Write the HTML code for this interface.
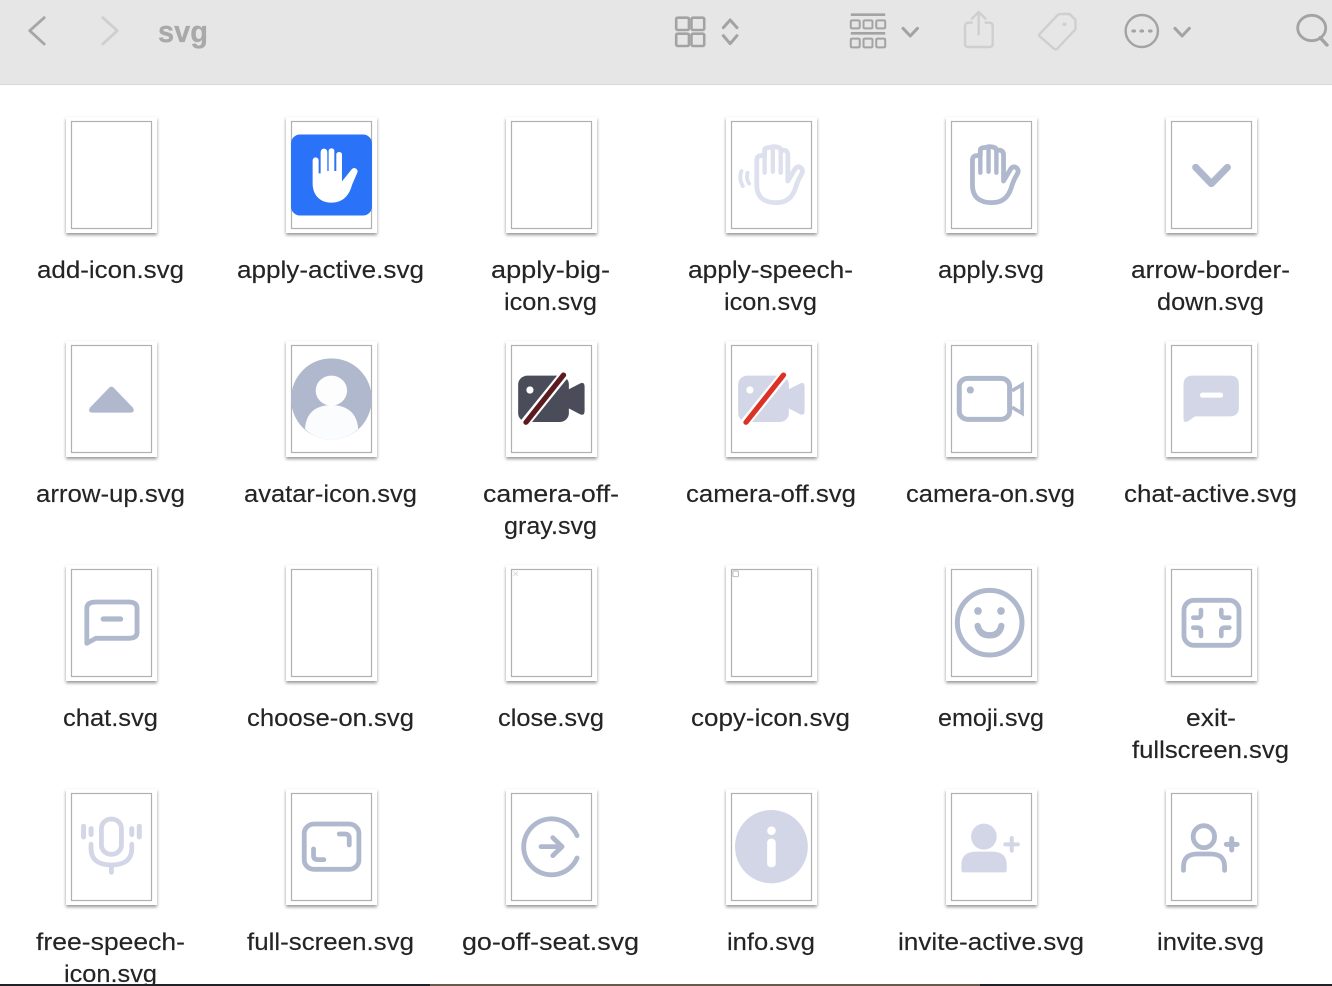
<!DOCTYPE html>
<html><head><meta charset="utf-8"><title>svg</title>
<style>
html,body{margin:0;padding:0;background:#fff;width:1332px;height:986px;overflow:hidden}
svg{position:absolute;left:0;top:0;display:block;filter:blur(.3px)}
text{font-family:"Liberation Sans",sans-serif;font-size:24px;fill:#242424;stroke:#242424;stroke-width:.15px}
.i *{vector-effect:non-scaling-stroke}
.s{fill:none;stroke-linecap:round;stroke-linejoin:round}
</style></head><body>
<svg width="1332" height="986" viewBox="0 0 1332 986" xmlns="http://www.w3.org/2000/svg">
<defs>
<filter id="sh" x="-20%" y="-20%" width="140%" height="140%"><feDropShadow dx="0" dy="2" stdDeviation="1.7" flood-color="#000" flood-opacity=".42"/></filter>
<g id="t"><rect x="66" y="117" width="91" height="116" fill="#fff" filter="url(#sh)"/><rect x="71.5" y="121.5" width="80" height="107" fill="#fff" stroke="#b0b0b0" stroke-width="1.2"/></g>
</defs>
<rect width="1332" height="84" fill="#e6e6e6"/><rect y="84" width="1332" height="1" fill="#d9d9d9"/>

<!-- toolbar left -->
<g class="i s" transform="translate(0,0) scale(.4248,.3333)">
<path d="M104 53 L70 92 L104 132" stroke="#a6a6a6" stroke-width="2.8"/>
<path d="M242 53 L276 92 L242 132" stroke="#cfcfcf" stroke-width="2.8"/>
</g>
<text x="158" y="42" textLength="50" lengthAdjust="spacingAndGlyphs" style="font-size:31px;font-weight:bold;fill:#a9a9a9;stroke:#a9a9a9;stroke-width:.3px">svg</text>
<!-- toolbar right -->
<g class="i s" transform="translate(666,0) scale(.4248,.3333)" stroke="#a3a3a3" stroke-width="2.6">
<rect x="24" y="53" width="30" height="37" rx="4"/><rect x="60" y="53" width="30" height="37" rx="4"/>
<rect x="24" y="101" width="30" height="37" rx="4"/><rect x="60" y="101" width="30" height="37" rx="4"/>
<path d="M135 83 L151 60 L167 83 M135 107 L151 131 L167 107" stroke-width="3"/>
<path d="M435 44 H516 M435 100 H516" stroke-width="2.6" stroke-linecap="butt"/>
<g stroke-width="2"><rect x="435" y="61" width="21" height="24" rx="3"/><rect x="465" y="61" width="21" height="24" rx="3"/><rect x="495" y="61" width="21" height="24" rx="3"/>
<rect x="435" y="116" width="21" height="26" rx="3"/><rect x="465" y="116" width="21" height="26" rx="3"/><rect x="495" y="116" width="21" height="26" rx="3"/></g>
<path d="M558 85 L575 108 L592 85 M1198 85 L1215 108 L1232 85" stroke-width="3"/>
<g stroke="#cfcfcf" stroke-width="2.4"><path d="M720 68 H712 Q704 68 704 78 V132 Q704 141 712 141 H761 Q769 141 769 132 V78 Q769 68 761 68 H752"/><path d="M736 103 V37 M720 56 L736 36 L752 56"/>
<path d="M879 103 L922 45 Q925 42 930 42 H950 L964 60 V88 L921 146 Q917 150 913 146 L879 108 Q877 105 879 103 Z"/><ellipse cx="938" cy="73" rx="5" ry="5" fill="#cfcfcf" stroke="none"/></g>
<ellipse cx="1120" cy="93" rx="38" ry="48" stroke-width="2.4"/>
<g fill="#a3a3a3" stroke="none"><ellipse cx="1101" cy="93" rx="5.5" ry="5"/><ellipse cx="1120" cy="93" rx="5.5" ry="5"/><ellipse cx="1140" cy="93" rx="5.5" ry="5"/></g>
<ellipse cx="1520" cy="84" rx="33" ry="38" stroke-width="2.8"/><path d="M1540 113 L1556 135" stroke-width="3.4"/>
</g>

<!-- tiles -->
<use href="#t"/><use href="#t" x="220"/><use href="#t" x="440"/><use href="#t" x="660"/><use href="#t" x="880"/><use href="#t" x="1100"/>
<use href="#t" y="224"/><use href="#t" x="220" y="224"/><use href="#t" x="440" y="224"/><use href="#t" x="660" y="224"/><use href="#t" x="880" y="224"/><use href="#t" x="1100" y="224"/>
<use href="#t" y="448"/><use href="#t" x="220" y="448"/><use href="#t" x="440" y="448"/><use href="#t" x="660" y="448"/><use href="#t" x="880" y="448"/><use href="#t" x="1100" y="448"/>
<use href="#t" y="672"/><use href="#t" x="220" y="672"/><use href="#t" x="440" y="672"/><use href="#t" x="660" y="672"/><use href="#t" x="880" y="672"/><use href="#t" x="1100" y="672"/>

<!-- apply-active -->
<rect x="291" y="134.5" width="81" height="81" rx="9" fill="#2a72f8"/>
<g transform="translate(50,105) scale(.3333)">
<path fill="#fff" d="M788 166 a9 9 0 0 1 18 0 V205 h6 V141 a10 10 0 0 1 20 0 V198 h4 V136 a9 9 0 0 1 17 0 V198 h6 V147 a9 9 0 0 1 17 0 V229 L905 193 a10 10 0 0 1 17 10 L906 240 C896 278 872 293 845 293 C810 293 788 270 788 235 Z"/>
</g>

<!-- row 0 line icons -->
<g class="i s" transform="translate(710,105) scale(.3571,.3333)">
<path stroke="#dde1ee" stroke-width="4.8" d="M131 240 V165 Q131 152 144 152 L153 150 V136 Q153 128 164 128 L176 125 Q198 125 198 136 Q218 132 218 150 V228 L238 192 Q246 180 256 190 Q262 198 256 208 Q246 225 239 250 Q226 293 186 293 Q131 293 131 240 Z"/>
<path stroke="#dde1ee" stroke-width="4.4" d="M153 145 V203 M176 135 V200 M198 140 V203"/>
<path stroke="#dde1ee" stroke-width="3.8" d="M88 198 Q80 222 92 243 M105 203 Q100 222 110 236"/>
<path stroke="#afb8cc" stroke-width="4.8" d="M735 240 V165 Q735 152 748 152 L757 150 V136 Q757 128 768 128 L780 125 Q802 125 802 136 Q822 132 822 150 V228 L842 192 Q850 180 860 190 Q866 198 860 208 Q850 225 843 250 Q830 293 790 293 Q735 293 735 240 Z"/>
<path stroke="#afb8cc" stroke-width="4.4" d="M757 145 V203 M780 135 V200 M802 140 V203"/>
<path stroke="#afb8cc" stroke-width="7" d="M1360 187 L1404 236 L1449 187"/>
</g>

<!-- row 1 -->
<g class="i" transform="translate(50,335) scale(.3571,.3333)">
<path fill="#afb8cc" d="M166 158 Q172 152 178 158 L232 218 Q240 233 224 233 H120 Q104 233 112 218 Z"/>
<ellipse cx="788" cy="192" rx="113" ry="122" fill="#afb8cc"/>
<ellipse cx="788" cy="167" rx="44" ry="45" fill="#fdfdfe"/>
<path fill="#fbfcfd" d="M714 282 Q718 212 788 210 Q858 212 863 282 Q830 314 788 314 Q745 314 714 282 Z"/>
</g>
<!-- camera off gray & light -->
<g transform="translate(50,335) scale(.3571,.3333)">
<rect x="1311" y="122" width="142" height="139" rx="26" fill="#4a4c5a"/>
<path fill="#4a4c5a" d="M1440 170 L1485 145 Q1497 140 1497 155 V228 Q1497 243 1485 238 L1440 213 Z"/>
<ellipse cx="1344" cy="165" rx="10" ry="11" fill="#fff"/>
<path d="M1454 100 L1318 280" stroke="#fff" stroke-width="28" fill="none"/>
<path d="M1438 120 L1333 262" stroke="#5c1b1f" stroke-width="15" stroke-linecap="round" fill="none"/>
</g>
<g transform="translate(270,335) scale(.3571,.3333)">
<rect x="1311" y="122" width="142" height="139" rx="26" fill="#d3d6e6"/>
<path fill="#d3d6e6" d="M1440 170 L1485 145 Q1497 140 1497 155 V228 Q1497 243 1485 238 L1440 213 Z"/>
<ellipse cx="1344" cy="165" rx="10" ry="11" fill="#fff"/>
<path d="M1454 100 L1318 280" stroke="#fff" stroke-width="28" fill="none"/>
<path d="M1438 120 L1333 262" stroke="#dc3226" stroke-width="15" stroke-linecap="round" fill="none"/>
</g>
<g class="i" transform="translate(710,335) scale(.3571,.3333)">
<rect class="s" x="698" y="130" width="141" height="123" rx="24" stroke="#afb8cc" stroke-width="5"/>
<ellipse cx="729" cy="165" rx="10" ry="11" fill="#afb8cc"/>
<path fill="none" stroke="#afb8cc" stroke-width="3.6" d="M846 167 L874 149 V235 L846 217"/>
<path fill="#d3d6e6" d="M1326 150 Q1326 122 1352 122 H1456 Q1481 122 1481 148 V218 Q1481 244 1456 244 H1358 L1338 259 Q1326 265 1326 252 Z"/>
<rect x="1372" y="173" width="65" height="15" rx="7" fill="#fff"/>
</g>

<!-- row 2 -->
<g class="i s" transform="translate(50,560) scale(.4974,.3333)">
<path stroke="#afb8cc" stroke-width="4.8" d="M74 250 V145 Q74 126 93 126 H158 Q175 126 175 145 V217 Q175 235 158 235 H92 Z"/>
<path stroke="#afb8cc" stroke-width="5.2" d="M107 177 H142"/>
<path stroke="#d3d6e6" stroke-width=".8" d="M932 35 L940 47 M940 35 L932 47"/>
<rect x="1373" y="33" width="11" height="17" rx="2" stroke="#b0b6c6" stroke-width=".9"/>
</g>
<g class="i s" transform="translate(930,560) scale(.3333)" stroke="#afb8cc">
<circle cx="179" cy="188" r="97" stroke-width="5"/>
<circle cx="144" cy="153" r="11.5" fill="#afb8cc" stroke="none"/><circle cx="213" cy="153" r="11.5" fill="#afb8cc" stroke="none"/>
<path stroke-width="6.4" d="M143 198 Q150 226 179 226 Q208 226 214 198"/>
<rect x="762" y="121" width="165" height="135" rx="30" stroke-width="4.8"/>
<path stroke-width="4.6" d="M813 150 V163 Q813 173 803 173 H790 M874 150 V163 Q874 173 884 173 H898 M790 203 H803 Q813 203 813 213 V228 M898 203 H884 Q874 203 874 213 V228"/>
</g>

<!-- row 3 -->
<g class="i s" transform="translate(50,785) scale(.3571,.3333)">
<g stroke="#d3d6e6">
<rect x="144" y="102" width="56" height="106" rx="28" stroke-width="4.8"/>
<path stroke-width="4.8" d="M115 178 V190 Q115 240 172 240 Q229 240 229 190 V178 M172 240 V262"/>
<path stroke-width="5" d="M94 124 V156 M115 131 V149 M229 131 V149 M250 124 V156"/>
</g>
<g stroke="#afb8cc" stroke-width="4.8">
<rect x="712" y="117" width="153" height="136" rx="28"/>
<path d="M810 147 H826 Q838 147 838 160 V180 M738 192 V212 Q738 224 750 224 H767"/>
<path d="M1476 152 A78 84 0 1 0 1476 219"/>
<path d="M1375 185 H1432 M1408 158 L1434 185 L1408 212"/>
</g>
</g>
<g class="i" transform="translate(710,785) scale(.3571,.3333)">
<ellipse cx="172" cy="185" rx="102" ry="110" fill="#d3d6e6"/>
<ellipse cx="172" cy="137" rx="12" ry="13" fill="#fff"/>
<rect x="160" y="161" width="24" height="86" rx="11" fill="#fff"/>
<ellipse cx="767" cy="155" rx="36" ry="39" fill="#d3d6e6"/>
<path fill="#d3d6e6" d="M704 255 V240 Q704 200 745 200 H790 Q831 200 831 240 V255 Q831 262 825 262 H710 Q704 262 704 255 Z"/>
<path class="s" stroke="#d3d6e6" stroke-width="4" d="M827 178 H862 M845 159 V197"/>
<g class="s" stroke="#afb8cc">
<ellipse cx="1383" cy="155" rx="30" ry="33" stroke-width="4.8"/>
<path stroke-width="4.8" d="M1326 256 V245 Q1326 207 1365 207 H1402 Q1441 207 1441 245 V256"/>
<path stroke-width="5" d="M1446 178 H1476 M1461 161 V195"/>
</g>
</g>

<!-- labels -->
<text x="37" y="278" textLength="147" lengthAdjust="spacingAndGlyphs">add-icon.svg</text>
<text x="237" y="278" textLength="187" lengthAdjust="spacingAndGlyphs">apply-active.svg</text>
<text x="491" y="278" textLength="119" lengthAdjust="spacingAndGlyphs">apply-big-</text>
<text x="504" y="310" textLength="93" lengthAdjust="spacingAndGlyphs">icon.svg</text>
<text x="688" y="278" textLength="165" lengthAdjust="spacingAndGlyphs">apply-speech-</text>
<text x="724" y="310" textLength="93" lengthAdjust="spacingAndGlyphs">icon.svg</text>
<text x="938" y="278" textLength="106" lengthAdjust="spacingAndGlyphs">apply.svg</text>
<text x="1131" y="278" textLength="159" lengthAdjust="spacingAndGlyphs">arrow-border-</text>
<text x="1157" y="310" textLength="107" lengthAdjust="spacingAndGlyphs">down.svg</text>

<text x="36" y="502" textLength="149" lengthAdjust="spacingAndGlyphs">arrow-up.svg</text>
<text x="244" y="502" textLength="173" lengthAdjust="spacingAndGlyphs">avatar-icon.svg</text>
<text x="483" y="502" textLength="136" lengthAdjust="spacingAndGlyphs">camera-off-</text>
<text x="504" y="534" textLength="93" lengthAdjust="spacingAndGlyphs">gray.svg</text>
<text x="686" y="502" textLength="170" lengthAdjust="spacingAndGlyphs">camera-off.svg</text>
<text x="906" y="502" textLength="169" lengthAdjust="spacingAndGlyphs">camera-on.svg</text>
<text x="1124" y="502" textLength="173" lengthAdjust="spacingAndGlyphs">chat-active.svg</text>

<text x="63" y="726" textLength="95" lengthAdjust="spacingAndGlyphs">chat.svg</text>
<text x="247" y="726" textLength="167" lengthAdjust="spacingAndGlyphs">choose-on.svg</text>
<text x="498" y="726" textLength="106" lengthAdjust="spacingAndGlyphs">close.svg</text>
<text x="691" y="726" textLength="159" lengthAdjust="spacingAndGlyphs">copy-icon.svg</text>
<text x="938" y="726" textLength="106" lengthAdjust="spacingAndGlyphs">emoji.svg</text>
<text x="1186" y="726" textLength="50" lengthAdjust="spacingAndGlyphs">exit-</text>
<text x="1132" y="758" textLength="157" lengthAdjust="spacingAndGlyphs">fullscreen.svg</text>

<text x="36" y="950" textLength="149" lengthAdjust="spacingAndGlyphs">free-speech-</text>
<text x="64" y="982" textLength="93" lengthAdjust="spacingAndGlyphs">icon.svg</text>
<text x="247" y="950" textLength="167" lengthAdjust="spacingAndGlyphs">full-screen.svg</text>
<text x="462" y="950" textLength="177" lengthAdjust="spacingAndGlyphs">go-off-seat.svg</text>
<text x="727" y="950" textLength="88" lengthAdjust="spacingAndGlyphs">info.svg</text>
<text x="898" y="950" textLength="186" lengthAdjust="spacingAndGlyphs">invite-active.svg</text>
<text x="1157" y="950" textLength="107" lengthAdjust="spacingAndGlyphs">invite.svg</text>

<!-- bottom strip -->
<rect x="0" y="984" width="1332" height="2" fill="#1f2226"/>
<rect x="430" y="984" width="550" height="2" fill="#6a5a4c"/>
</svg>
</body></html>
